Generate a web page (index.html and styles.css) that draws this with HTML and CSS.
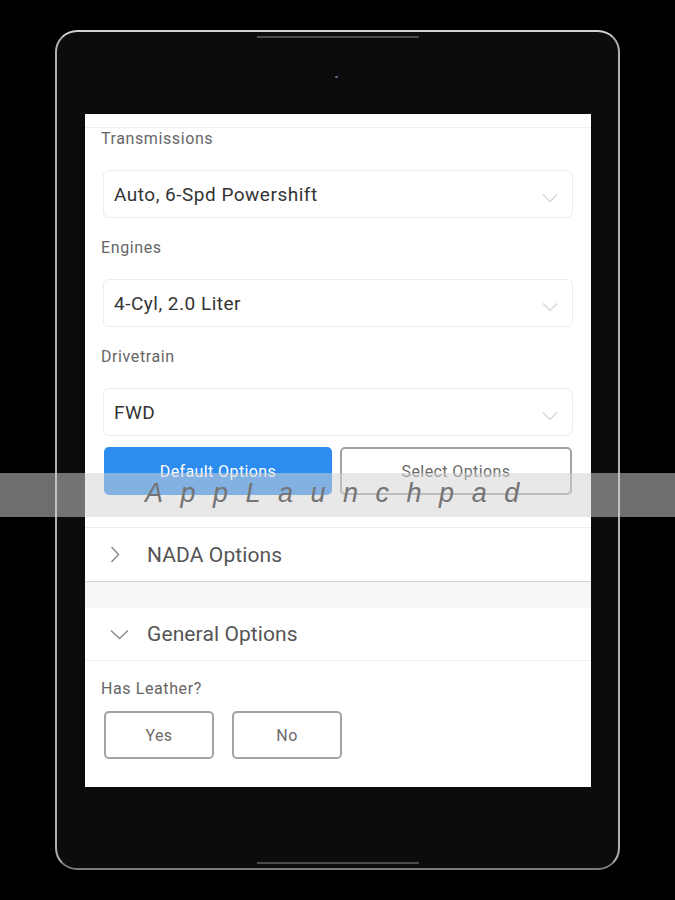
FILE: index.html
```html
<!DOCTYPE html>
<html>
<head>
<meta charset="utf-8">
<link rel="stylesheet" href="styles.css">
</head>
<body>
<div class="tablet">
  <span class="notch notch-top"></span>
  <span class="camera"></span>
  <span class="notch notch-bottom"></span>
  <div class="screen">
    <div class="topline"></div>
    <div class="form">
      <div class="group">
        <div class="label">Transmissions</div>
        <div class="select"><span>Auto, 6-Spd Powershift</span><svg class="caret" width="16" height="10" viewBox="0 0 16 10"><path d="M1 1.5 L8 8.5 L15 1.5" fill="none" stroke="#d6d6d6" stroke-width="1.3"/></svg></div>
      </div>
      <div class="group">
        <div class="label">Engines</div>
        <div class="select"><span>4-Cyl, 2.0 Liter</span><svg class="caret" width="16" height="10" viewBox="0 0 16 10"><path d="M1 1.5 L8 8.5 L15 1.5" fill="none" stroke="#d6d6d6" stroke-width="1.3"/></svg></div>
      </div>
      <div class="group">
        <div class="label">Drivetrain</div>
        <div class="select"><span>FWD</span><svg class="caret" width="16" height="10" viewBox="0 0 16 10"><path d="M1 1.5 L8 8.5 L15 1.5" fill="none" stroke="#d6d6d6" stroke-width="1.3"/></svg></div>
      </div>
      <div class="btn-row">
        <div class="btn btn-primary">Default Options</div>
        <div class="btn btn-outline">Select Options</div>
      </div>
    </div>
    <div class="acc-row acc-nada">
      <span class="acc-icon"><svg width="10" height="17" viewBox="0 0 10 17"><path d="M1.5 1 L8.5 8.5 L1.5 16" fill="none" stroke="#8a8a8a" stroke-width="1.4"/></svg></span>
      <span class="acc-title">NADA Options</span>
    </div>
    <div class="acc-gap"></div>
    <div class="acc-row acc-general">
      <span class="acc-icon"><svg width="19" height="11" viewBox="0 0 19 11"><path d="M1 1.5 L9.5 9.5 L18 1.5" fill="none" stroke="#8a8a8a" stroke-width="1.4"/></svg></span>
      <span class="acc-title">General Options</span>
    </div>
    <div class="form form-bottom">
      <div class="label">Has Leather?</div>
      <div class="yn-row">
        <div class="btn btn-outline btn-yn">Yes</div>
        <div class="btn btn-outline btn-yn">No</div>
      </div>
    </div>
  </div>
</div>
<div class="watermark"><span class="wm-text">AppLaunchpad</span></div>
</body>
</html>
```

FILE: styles.css
```css
html, body {
  margin: 0;
  padding: 0;
}
body {
  background: #000;
  width: 675px;
  height: 900px;
  position: relative;
  overflow: hidden;
  font-family: Roboto, "Liberation Sans", sans-serif;
}
.tablet {
  box-sizing: border-box;
  position: relative;
  margin: 30px 0 0 55px;
  width: 565px;
  height: 840px;
  border: 2px solid #b0b0b0;
  border-top-color: #d2d2d2;
  border-bottom-color: #7a7a7a;
  border-radius: 22px;
  background: #0c0c0c;
  padding: 82px 0 0 28px;
}
.notch {
  position: absolute;
  left: 200px;
  width: 162px;
  height: 2px;
  background: #4a4a4a;
}
.notch-top { top: 4px; }
.notch-bottom { bottom: 4px; }
.camera {
  position: absolute;
  left: 278px;
  top: 44px;
  width: 3px;
  height: 2px;
  background: #6a6a9a;
  border-radius: 1px;
}
.screen {
  width: 506px;
  height: 673px;
  background: #fff;
  overflow: hidden;
  display: flex;
  flex-direction: column;
}
.topline {
  height: 13px;
  border-bottom: 1px solid #eeeeee;
  flex: none;
}
.form {
  padding: 0 18px 0 16px;
}
.group + .group {
  margin-top: 19px;
}
.label {
  height: 22px;
  line-height: 22px;
  font-size: 16px;
  font-weight: 400;
  color: #666;
  letter-spacing: 0.6px;
}
.select {
  box-sizing: border-box;
  margin: 20px 0 0 2px;
  height: 48px;
  border: 1px solid #ececec;
  border-radius: 6px;
  display: flex;
  align-items: center;
  justify-content: space-between;
  padding: 0 14px 0 10px;
  font-size: 19px;
  letter-spacing: 0.5px;
  color: #333;
}
.caret {
  margin-top: 8px;
}
.btn-row {
  display: flex;
  gap: 8px;
  margin: 11px 0 0 3px;
  width: 468px;
}
.btn {
  box-sizing: border-box;
  height: 48px;
  border-radius: 5px;
  display: flex;
  align-items: center;
  justify-content: center;
  font-size: 16px;
  letter-spacing: 0.4px;
}
.btn-row .btn {
  flex: 1;
}
.btn-primary {
  background: #2d8cf0;
  color: #fff;
}
.btn-outline {
  border: 2px solid #a3a3a3;
  color: #6a6a6a;
  background: #fff;
}
.acc-row {
  display: flex;
  align-items: center;
  padding-left: 25px;
  font-size: 21px;
  color: #555;
}
.acc-nada {
  margin-top: 32px;
  height: 53px;
  border-top: 1px solid #ececec;
  border-bottom: 1px solid #d4d4d4;
}
.acc-gap {
  height: 26px;
  background: #f7f7f7;
  flex: none;
}
.acc-general {
  height: 52px;
  border-bottom: 1px solid #eeeeee;
}
.acc-icon {
  width: 37px;
  display: flex;
  align-items: center;
}
.acc-title {
  letter-spacing: 0.1px;
}
.form-bottom .label {
  margin-top: 17px;
}
.yn-row {
  display: flex;
  gap: 18px;
  margin: 11px 0 0 3px;
}
.btn-yn {
  width: 110px;
}
.watermark {
  position: absolute;
  left: 0;
  top: 473px;
  width: 675px;
  height: 44px;
  background: rgba(211, 211, 211, 0.52);
  line-height: 40px;
  padding-left: 145px;
  box-sizing: border-box;
}
.wm-text {
  font-family: "Liberation Sans", Arial, sans-serif;
  font-style: italic;
  font-size: 27px;
  letter-spacing: 17.5px;
  color: #747474;
}
```
